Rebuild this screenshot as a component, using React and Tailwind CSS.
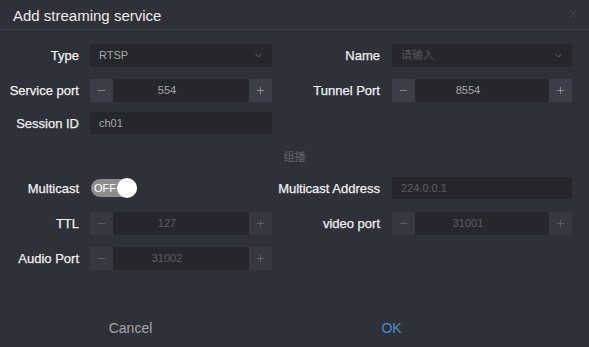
import { ChevronDown, X, Minus, Plus } from 'lucide-react'

function Label({ children }) {
  return (
    <div className="text-[13px] text-[#f0f0f0] text-right leading-none whitespace-nowrap [-webkit-text-stroke:0.25px_#f0f0f0]">
      {children}
    </div>
  )
}

function Select({ value, placeholder }) {
  return (
    <div className="h-[23px] bg-[#26272d] flex items-center justify-between pl-[9px] pr-[8px] text-[11px]">
      {value ? (
        <span className="text-[#a6a6a6]">{value}</span>
      ) : (
        <span className="text-[#55575c]">{placeholder}</span>
      )}
      <ChevronDown size={11} strokeWidth={1.5} className="text-[#8a8a8a]" />
    </div>
  )
}

function Stepper({ value, disabled = false }) {
  const btn = disabled ? 'bg-[#363940] text-[#6c6e73]' : 'bg-[#3c3f47] text-[#a9abb0]'
  return (
    <div className="h-[23px] flex bg-[#26272d]">
      <div className={`w-[23px] flex items-center justify-center ${btn}`}>
        <Minus size={11} strokeWidth={1.5} />
      </div>
      <div className={`flex-1 flex items-center justify-center pr-[28px] text-[11px] ${disabled ? 'text-[#5c5e63]' : 'text-[#a6a6a6]'}`}>
        {value}
      </div>
      <div className={`w-[23px] flex items-center justify-center ${btn}`}>
        <Plus size={11} strokeWidth={1.5} />
      </div>
    </div>
  )
}

function TextInput({ value, disabled = false }) {
  return (
    <div className={`h-[22px] bg-[#26272d] flex items-center pl-[9px] text-[11px] ${disabled ? 'text-[#5c5e63]' : 'text-[#a6a6a6]'}`}>
      {value}
    </div>
  )
}

function Row({ left, leftLabel, right, rightLabel, className = '' }) {
  return (
    <div className={`flex items-center ${className}`}>
      <div className="w-[79px] flex justify-end">{leftLabel && <Label>{leftLabel}</Label>}</div>
      <div className="w-[182px] ml-[11px]">{left}</div>
      <div className="w-[108px] flex justify-end">{rightLabel && <Label>{rightLabel}</Label>}</div>
      <div className="w-[180px] ml-[12px]">{right}</div>
    </div>
  )
}

export default function App() {
  return (
    <div
      className="w-[589px] h-[347px] bg-[#2f3139] flex flex-col overflow-hidden"
      style={{ fontFamily: '"Liberation Sans", "Noto Sans CJK SC", sans-serif' }}
    >
      {/* Header */}
      <div className="h-[30px] flex items-center justify-between pl-[13px] pr-[10px] border-b border-[#3b3e45]">
        <div className="text-[15px] text-[#ececec] leading-none pt-[2px]">Add streaming service</div>
        <X size={12} strokeWidth={1.5} className="text-[#4b4e55] -mt-[2px]" />
      </div>

      {/* Form */}
      <div className="flex flex-col pt-[14px]">
        <Row leftLabel="Type" left={<Select value="RTSP" />} rightLabel="Name" right={<Select placeholder="请输入" />} />
        <Row
          className="mt-[12px]"
          leftLabel="Service port"
          left={<Stepper value="554" />}
          rightLabel="Tunnel Port"
          right={<Stepper value="8554" />}
        />
        <Row className="mt-[10px]" leftLabel="Session ID" left={<TextInput value="ch01" />} />

        <div className="mt-[18px] text-center text-[11px] text-[#64666b] leading-none">组播</div>

        <Row
          className="mt-[14px]"
          leftLabel="Multicast"
          left={
            <div className="relative w-[46px] h-[20px] ml-[1px]">
              <div className="absolute inset-y-[1px] left-0 right-0 rounded-full bg-[#8d8d8f] flex items-center pl-[3px] text-[11px] text-white leading-none">
                OFF
              </div>
              <div className="absolute right-0 top-0 w-[20px] h-[20px] rounded-full bg-white" />
            </div>
          }
          rightLabel="Multicast Address"
          right={<TextInput value="224.0.0.1" disabled />}
        />
        <Row
          className="mt-[13px]"
          leftLabel="TTL"
          left={<Stepper value="127" disabled />}
          rightLabel="video port"
          right={<Stepper value="31001" disabled />}
        />
        <Row className="mt-[12px]" leftLabel="Audio Port" left={<Stepper value="31002" disabled />} />
      </div>

      {/* Footer */}
      <div className="flex mt-[48px]">
        <div className="w-[261px] text-center text-[14px] text-[#a4a5a8]">Cancel</div>
        <div className="w-[261px] text-center text-[14px] text-[#4a8cd0]">OK</div>
      </div>
    </div>
  )
}
